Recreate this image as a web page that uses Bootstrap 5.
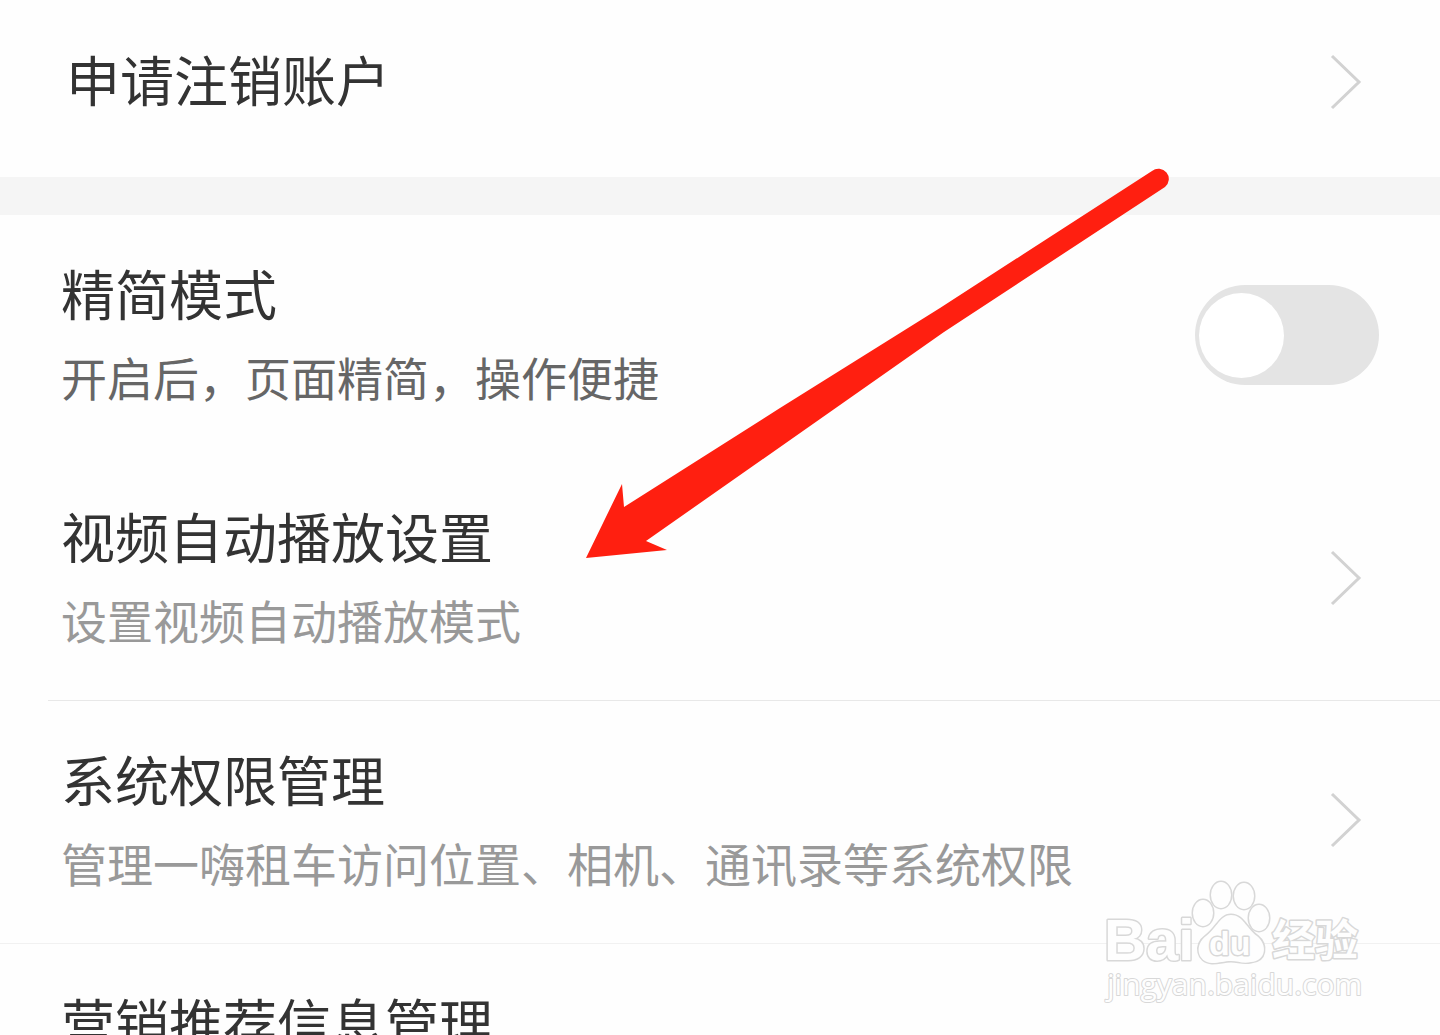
<!DOCTYPE html>
<html lang="zh-CN">
<head>
<meta charset="utf-8">
<meta name="viewport" content="width=device-width, initial-scale=1">
<title>设置</title>
<link href="https://cdn.jsdelivr.net/npm/bootstrap@5.3.0/dist/css/bootstrap.min.css" rel="stylesheet">
<style>
  body { background: #fefefe; font-family: "Noto Sans CJK SC", sans-serif; color: #333; }
  .settings-page { height: 100vh; }
  .setting-row { min-height: 243px; padding: 42px 61px 46px; background: #fefefe; color: #333; }
  .setting-row-top { min-height: 177px; padding: 43px 66px 57px; }
  .setting-title { font-size: 54px; line-height: 72px; }
  .setting-note { font-size: 46px; line-height: 62px; color: #999; }
  .setting-note-dark { color: #666; }
  .line-inset::after { content: ""; position: absolute; left: 48px; right: 0; bottom: 0; height: 1px; background: #e8e8e8; }
  .line-full { border-bottom: 1px solid #f1f1f1 !important; }
  .section-gap { height: 38px; background: #f5f5f5; }
  .chevron { width: 32px; height: 56px; margin-right: 17px; fill: none; stroke: #d2d2d2; stroke-width: 3; }
  .setting-row-top .chevron { margin-right: 12px; }
  .form-check-input.mode-switch { position: relative; width: 184px; height: 100px; margin: 0; border: 0; border-radius: 50px; background: #e4e4e4; }
  .mode-switch::before { content: ""; position: absolute; left: 4px; top: 8px; width: 85px; height: 85px; border-radius: 50%; background: #fff; }
  .mode-switch:checked { background: #ff1f10 !important; }
  .mode-switch:checked::before { left: 95px; }
  .pointer-arrow { left: 580px; top: 160px; width: 600px; height: 410px; pointer-events: none; }
  .watermark { right: 70px; bottom: 20px; width: 270px; height: 145px; pointer-events: none; }
  .watermark .outlined { fill: #fefefe; stroke: #d8d8d8; stroke-width: 3px; paint-order: stroke; stroke-linejoin: round; }
  .wm-latin { font: bold 58px "Liberation Sans", sans-serif; }
  .wm-du { font: bold 34px "Liberation Sans", sans-serif; }
  .wm-han { font: bold 43px "Noto Sans CJK SC", sans-serif; }
  .watermark .wm-url { font: 30px "Open Sans", sans-serif; stroke-width: 2px; }
</style>
<script src="https://cdn.jsdelivr.net/npm/bootstrap@5.3.0/dist/js/bootstrap.bundle.min.js"></script>
</head>
<body>
<main class="settings-page position-relative overflow-hidden">
  <div class="list-group list-group-flush">
    <a href="#" class="list-group-item border-0 setting-row setting-row-top d-flex justify-content-between align-items-center">
      <span class="setting-title align-self-start">申请注销账户</span>
      <svg class="chevron" viewBox="0 0 32 56" aria-hidden="true"><path d="M2 2 29 28 2 54"/></svg>
    </a>
  </div>
  <div class="section-gap"></div>
  <div class="list-group list-group-flush">
    <div class="list-group-item border-0 setting-row d-flex justify-content-between align-items-center">
      <label for="simpleMode" class="d-flex flex-column gap-3 align-self-start">
        <span class="setting-title">精简模式</span>
        <span class="setting-note setting-note-dark">开启后，页面精简，操作便捷</span>
      </label>
      <input class="form-check-input mode-switch" type="checkbox" role="switch" id="simpleMode">
    </div>
    <a href="#" class="list-group-item border-0 setting-row line-inset d-flex justify-content-between align-items-center">
      <span class="d-flex flex-column gap-3 align-self-start">
        <span class="setting-title">视频自动播放设置</span>
        <span class="setting-note">设置视频自动播放模式</span>
      </span>
      <svg class="chevron" viewBox="0 0 32 56" aria-hidden="true"><path d="M2 2 29 28 2 54"/></svg>
    </a>
    <a href="#" class="list-group-item border-0 setting-row line-full d-flex justify-content-between align-items-center">
      <span class="d-flex flex-column gap-3 align-self-start">
        <span class="setting-title">系统权限管理</span>
        <span class="setting-note">管理一嗨租车访问位置、相机、通讯录等系统权限</span>
      </span>
      <svg class="chevron" viewBox="0 0 32 56" aria-hidden="true"><path d="M2 2 29 28 2 54"/></svg>
    </a>
    <a href="#" class="list-group-item border-0 setting-row">
      <span class="setting-title">营销推荐信息管理</span>
    </a>
  </div>

  <svg class="pointer-arrow position-absolute" viewBox="580 160 600 410" aria-hidden="true">
    <path fill="#ff1f10" d="M586 558 622 484 624 507 780 408 940 308 1152 171A10 10 0 0 1 1165 187L944 332 646 541 667 550Z"/>
  </svg>

  <svg class="watermark position-absolute" viewBox="1100 870 270 145" role="img" aria-label="Baidu 经验">
    <text class="outlined wm-latin" x="1104" y="960">Bai</text>
    <g class="outlined">
      <ellipse cx="1203" cy="913" rx="10" ry="13"/>
      <ellipse cx="1221" cy="895" rx="10" ry="13"/>
      <ellipse cx="1244" cy="896" rx="10" ry="13"/>
      <ellipse cx="1259" cy="918" rx="10" ry="13"/>
      <path d="M1231 915C1220 915 1217 928 1206 936 1194 945 1197 962 1212 963 1220 963 1224 961 1231 961 1238 961 1243 964 1251 962 1266 961 1268 945 1257 936 1246 928 1243 915 1231 915Z"/>
    </g>
    <text class="outlined wm-du" x="1209" y="955">du</text>
    <text class="outlined wm-han" x="1272" y="956">经验</text>
    <text class="outlined wm-url" x="1107" y="995">jingyan.baidu.com</text>
  </svg>
</main>
</body>
</html>
